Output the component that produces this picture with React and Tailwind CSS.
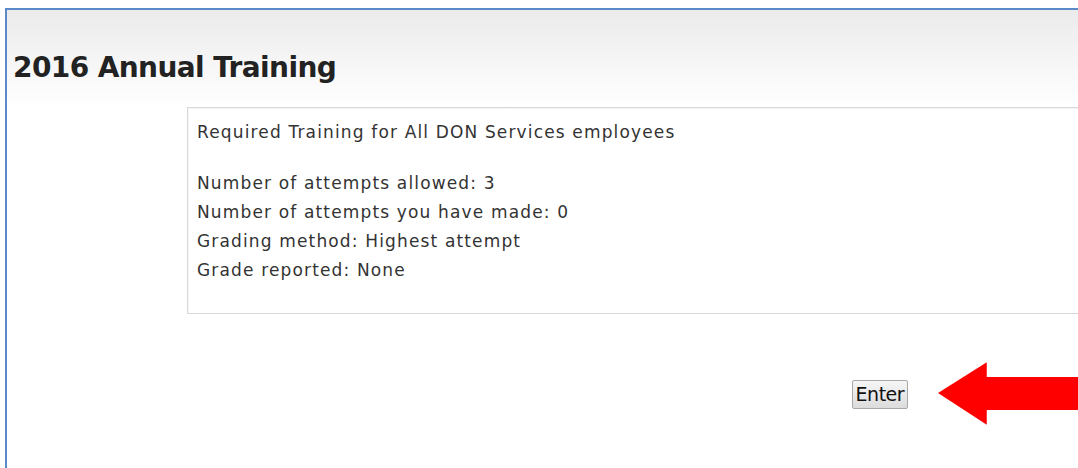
export default function App() {
  return (
    <div className="w-[1078px] h-[468px] overflow-hidden bg-white pt-[8px] pl-[5px]" style={{ fontFamily: '"DejaVu Sans", sans-serif' }}>
      <div className="h-[460px] border-l-2 border-t-2 border-[#5b8ac8] bg-white overflow-hidden">
        {/* header band */}
        <div className="h-[97px] bg-gradient-to-b from-[#ebebeb] to-white pl-[6px] pt-[42px]">
          <h1 className="text-[28px] leading-[32px] font-bold text-[#222] tracking-[-0.6px] whitespace-nowrap">2016 Annual Training</h1>
        </div>
        {/* description box */}
        <div className="ml-[180px] w-[1000px] h-[207px] border border-[#d9d9d9] shadow-[inset_1px_1px_0_#f4f4f4] pl-[9px] pt-[10px] text-[17px] leading-[29px] text-[#333] tracking-[1.15px] whitespace-nowrap">
          <p>Required Training for All DON Services employees</p>
          <div className="mt-[22px]">
            <p>Number of attempts allowed: 3</p>
            <p>Number of attempts you have made: 0</p>
            <p>Grading method: Highest attempt</p>
            <p>Grade reported: None</p>
          </div>
        </div>
        {/* action row */}
        <div className="flex items-center mt-[48px] h-[64px]">
          <button className="ml-[845px] w-[56px] h-[29px] border border-[#a8a8a8] rounded-[2px] bg-gradient-to-b from-[#f6f6f6] to-[#dcdcdc] text-[19px] text-[#111] leading-none tracking-[-0.5px]">Enter</button>
          <svg className="ml-[30px]" width="141" height="64" viewBox="0 0 141 64">
            <polygon points="0,31 49,0 49,15 141,15 141,48 49,48 49,63" fill="#ff0000" />
          </svg>
        </div>
      </div>
    </div>
  );
}
